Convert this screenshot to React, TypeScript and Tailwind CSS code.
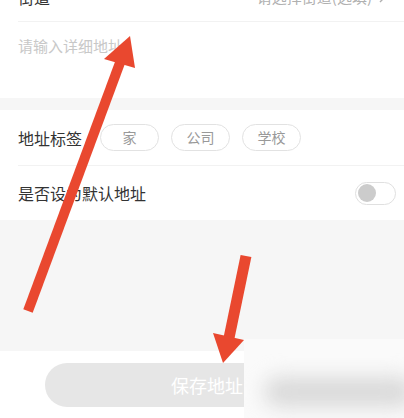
import React from "react";

export default function App() {
  return (
    <div className="relative w-[404px] h-[418px] overflow-hidden bg-[#f6f6f6] font-['Noto_Sans_CJK_SC','Noto_Sans',sans-serif]">
      {/* Card 1 */}
      <div className="bg-white">
        <div className="-mt-[27px] h-[48px] flex items-center justify-between pl-[18px] pr-[18px]">
          <span className="text-[16px] text-[#333333]">街道</span>
          <span className="flex items-center gap-[7px] text-[15px] text-[#b0b0b0]">
            请选择街道(选填)
            <svg width="7" height="12" viewBox="0 0 7 12" fill="none">
              <path d="M1 1l5 5-5 5" stroke="#b0b0b0" strokeWidth="1.4" />
            </svg>
          </span>
        </div>
        <div className="ml-[18px] h-px bg-[#f2f2f2]" />
        <div className="h-[76px] pl-[18px] pt-[14px] text-[15px] leading-[20px] text-[#c8c8c8]">
          请输入详细地址
        </div>
      </div>

      {/* Card 2 */}
      <div className="mt-[12px] bg-white">
        <div className="h-[55px] flex items-center pl-[18px]">
          <span className="text-[16px] text-[#333333]">地址标签</span>
          <div className="ml-[18px] flex gap-[12px]">
            {["家", "公司", "学校"].map((t) => (
              <div
                key={t}
                className="w-[59px] h-[27px] rounded-full border border-[#e2e2e2] flex items-center justify-center text-[14px] text-[#999999]"
              >
                {t}
              </div>
            ))}
          </div>
        </div>
        <div className="ml-[18px] h-px bg-[#f2f2f2]" />
        <div className="h-[54px] flex items-center justify-between pl-[18px] pr-[8px]">
          <span className="text-[16px] text-[#333333]">是否设为默认地址</span>
          <div className="w-[41px] h-[23px] rounded-full border border-[#e0e0e0] bg-white flex items-center pl-[2px]">
            <div className="w-[18px] h-[18px] rounded-full bg-[#cccccc]" />
          </div>
        </div>
      </div>

      <div className="h-[131px]" />

      {/* Bottom */}
      <div className="h-[67px] bg-white pt-[12px]">
        <div className="ml-[45px] mr-[35px] h-[44px] rounded-full bg-[#e6e6e6] flex items-center justify-center text-[18px] text-white">
          保存地址
        </div>
      </div>

      {/* Arrows overlay */}
      <svg className="absolute inset-0 pointer-events-none" width="404" height="418" viewBox="0 0 404 418">
        <line x1="28" y1="311" x2="121" y2="60" stroke="#e9482f" strokeWidth="10" />
        <polygon points="130,36 104,59 135,68" fill="#e9482f" />
        <line x1="246" y1="256" x2="229" y2="338" stroke="#e9482f" strokeWidth="11" />
        <polygon points="223,363 213,333 244,340" fill="#e9482f" />
      </svg>

      {/* Blurred watermark */}
      <div className="absolute left-[244px] top-[339px] w-[160px] h-[79px] bg-[#fafafa] overflow-hidden">
        <div className="absolute left-[20px] top-[38px] w-[150px] h-[30px] rounded-full bg-[#d9d9d9] blur-[10px]" />
      </div>
    </div>
  );
}
